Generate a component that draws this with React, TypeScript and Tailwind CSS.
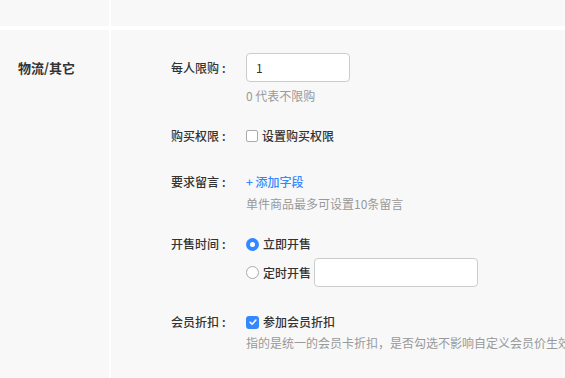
const font = { fontFamily: '"Noto Sans CJK SC", "Noto Sans", sans-serif' };

function Label({ text, tall }: { text: string; tall?: boolean }) {
  return (
    <div
      className={`w-[135px] shrink-0 pl-[60px] text-[12px] font-medium text-[#333] ${
        tall ? 'leading-[29px]' : 'leading-[18px]'
      }`}
    >
      {text}
      <span className="ml-[3px]">:</span>
    </div>
  );
}

function Radio({ checked }: { checked?: boolean }) {
  return checked ? (
    <span className="flex h-[13px] w-[13px] items-center justify-center rounded-full bg-[#3388ff]">
      <span className="h-[5px] w-[5px] rounded-full bg-white" />
    </span>
  ) : (
    <span className="h-[13px] w-[13px] rounded-full border border-[#aaa] bg-white" />
  );
}

export default function App() {
  return (
    <div
      className="flex h-[378px] w-[565px] flex-col gap-[4px] overflow-hidden bg-white"
      style={font}
    >
      <div className="flex h-[26px] shrink-0 gap-[2px]">
        <div className="w-[109px] bg-[#f8f8f8]" />
        <div className="flex-1 bg-[#f8f8f8]" />
      </div>

      <div className="flex flex-1 gap-[2px]">
        <div className="w-[109px] shrink-0 bg-[#f8f8f8] pl-[18px] pt-[29px]">
          <p className="text-[13px] font-semibold leading-[18px] text-[#333]">物流/其它</p>
        </div>

        <div className="min-w-0 flex-1 bg-[#f8f8f8] pt-[23px] text-[12px]">
          {/* 每人限购 */}
          <div className="flex">
            <Label text="每人限购" tall />
            <div>
              <div className="h-[29px] w-[104px] rounded-[4px] border border-[#ccc] bg-white px-[9px] text-[12px] leading-[27px] text-[#333]">
                1
              </div>
              <p className="mt-[5px] leading-[18px] text-[#999]">0 代表不限购</p>
            </div>
          </div>

          {/* 购买权限 */}
          <div className="mt-[22px] flex">
            <Label text="购买权限" />
            <div className="flex items-center gap-[4px] leading-[18px]">
              <span className="h-[12px] w-[12px] rounded-[2px] border border-[#aaa] bg-white" />
              <span className="font-medium text-[#333]">设置购买权限</span>
            </div>
          </div>

          {/* 要求留言 */}
          <div className="mt-[28px] flex">
            <Label text="要求留言" />
            <div className="leading-[18px]">
              <p className="font-medium text-[#3388ff]">+ 添加字段</p>
              <p className="mt-[4px] whitespace-nowrap text-[#999]">单件商品最多可设置10条留言</p>
            </div>
          </div>

          {/* 开售时间 */}
          <div className="mt-[22px] flex">
            <Label text="开售时间" />
            <div>
              <div className="flex items-center gap-[4px] leading-[18px]">
                <Radio checked />
                <span className="font-medium text-[#333]">立即开售</span>
              </div>
              <div className="mt-[5px] flex items-center gap-[4px]">
                <Radio />
                <span className="font-medium leading-[18px] text-[#333]">定时开售</span>
                <div className="ml-[-1px] h-[29px] w-[164px] rounded-[4px] border border-[#ccc] bg-white" />
              </div>
            </div>
          </div>

          {/* 会员折扣 */}
          <div className="mt-[26px] flex">
            <Label text="会员折扣" />
            <div className="min-w-0 leading-[18px]">
              <div className="flex items-center gap-[4px]">
                <span className="flex h-[13px] w-[13px] items-center justify-center rounded-[3px] bg-[#3388ff]">
                  <svg viewBox="0 0 12 12" className="h-[10px] w-[10px]">
                    <path
                      d="M2.5 6.2 L5 8.6 L9.5 3.6"
                      fill="none"
                      stroke="white"
                      strokeWidth="1.8"
                      strokeLinecap="round"
                      strokeLinejoin="round"
                    />
                  </svg>
                </span>
                <span className="font-medium text-[#333]">参加会员折扣</span>
              </div>
              <p className="mt-[3px] whitespace-nowrap text-[#999]">
                指的是统一的会员卡折扣，是否勾选不影响自定义会员价生效
              </p>
            </div>
          </div>
        </div>
      </div>
    </div>
  );
}
